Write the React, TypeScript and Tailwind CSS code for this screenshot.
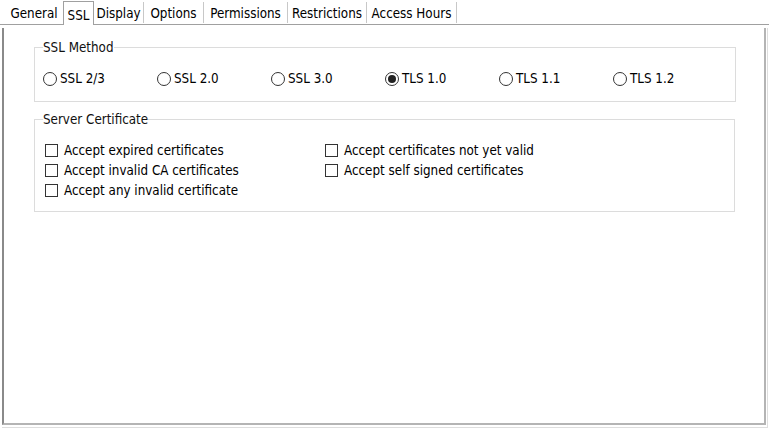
const tabs: [string, number][] = [
  ["General", 58],
  ["SSL", 31],
  ["Display", 50],
  ["Options", 60],
  ["Permissions", 84],
  ["Restrictions", 79],
  ["Access Hours", 90],
];
const methods = ["SSL 2/3", "SSL 2.0", "SSL 3.0", "TLS 1.0", "TLS 1.1", "TLS 1.2"];

function Radio({ label, checked }: { label: string; checked?: boolean }) {
  return (
    <div className="flex w-[114px] items-center">
      <span className="flex h-[14px] w-[14px] items-center justify-center rounded-full border border-[#333]">
        {checked && <span className="h-[8px] w-[8px] rounded-full bg-[#222]" />}
      </span>
      <span className="ml-[3px]">{label}</span>
    </div>
  );
}

function Check({ label }: { label: string }) {
  return (
    <div className="flex h-[20px] items-center">
      <span className="h-[13px] w-[13px] border border-[#333] bg-white" />
      <span className="ml-[6px]">{label}</span>
    </div>
  );
}

export default function App() {
  return (
    <div
      className="h-[436px] w-[769px] bg-white text-[13.3px] leading-[15px] text-black"
      style={{ fontFamily: "Tahoma, 'DejaVu Sans Condensed', 'Liberation Sans', sans-serif" }}
    >
      {/* tab strip */}
      <div className="flex h-[25px] items-end border-b border-[#a0a0a0] pl-[5px]">
        {tabs.map(([t, w], i) =>
          t === "SSL" ? (
            <div
              key={t}
              className="-mb-px flex h-[24px] w-[31px] items-center justify-center border border-b-0 border-[#a0a0a0] bg-white pt-[3px]"
            >
              {t}
            </div>
          ) : (
            <div
              key={t}
              style={{ width: w }}
              className={
                "mb-[1px] flex h-[21px] items-center justify-center pt-[2px] " +
                (i > 1 ? "border-r border-[#c8c8c8]" : "")
              }
            >
              {t}
            </div>
          ),
        )}
      </div>

      {/* page */}
      <div className="ml-[2px] mt-[3px] w-[766px] border-r border-b border-[#dedede] pr-[1px] pb-[2px]">
        <div className="h-[397px] border-l-2 border-r-2 border-b-2 border-l-[#8a8a8a] border-r-[#b4b4b4] border-b-[#b4b4b4] pl-[30px] pt-[12px]">
          <fieldset className="w-[701px] border border-[#dcdcdc] px-[8px] pb-[15px]">
            <legend className="text-[#111]">SSL Method</legend>
            <div className="mt-[16px] flex">
              {methods.map((m) => (
                <Radio key={m} label={m} checked={m === "TLS 1.0"} />
              ))}
            </div>
          </fieldset>

          <fieldset className="mt-[10px] w-[701px] border border-[#dcdcdc] px-[8px] pb-[11px]">
            <legend className="text-[#111]">Server Certificate</legend>
            <div className="mt-[13px] flex pl-[2px]">
              <div className="w-[280px]">
                <Check label="Accept expired certificates" />
                <Check label="Accept invalid CA certificates" />
                <Check label="Accept any invalid certificate" />
              </div>
              <div>
                <Check label="Accept certificates not yet valid" />
                <Check label="Accept self signed certificates" />
              </div>
            </div>
          </fieldset>
        </div>
      </div>
    </div>
  );
}
